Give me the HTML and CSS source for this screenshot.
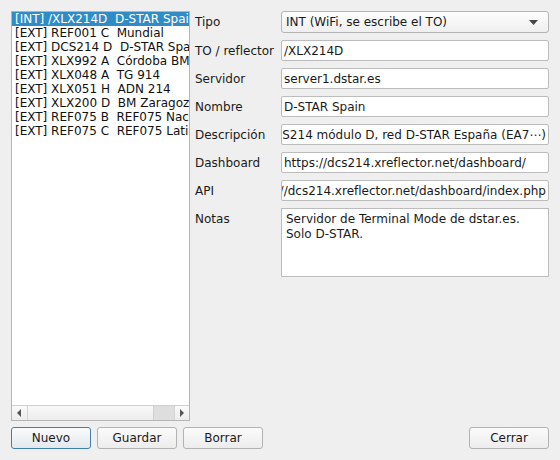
FILE: index.html
```html
<!DOCTYPE html>
<html lang="es">
<head>
<meta charset="utf-8">
<title>Reflectores</title>
<link rel="stylesheet" href="styles.css">
</head>
<body>
<div class="dialog">
  <div class="main">
    <div class="listbox">
      <ul class="items">
        <li class="item selected">[INT] /XLX214D  D-STAR Spain</li>
        <li class="item">[EXT] REF001 C  Mundial</li>
        <li class="item">[EXT] DCS214 D  D-STAR Spain</li>
        <li class="item">[EXT] XLX992 A  Córdoba BM</li>
        <li class="item">[EXT] XLX048 A  TG 914</li>
        <li class="item">[EXT] XLX051 H  ADN 214</li>
        <li class="item">[EXT] XLX200 D  BM Zaragoza</li>
        <li class="item">[EXT] REF075 B  REF075 Nacional</li>
        <li class="item">[EXT] REF075 C  REF075 Latino</li>
      </ul>
      <div class="hscroll">
        <span class="sb-btn"><svg width="5" height="8" viewBox="0 0 5 8"><path d="M4 0 L0 4 L4 8 Z" fill="#555"/></svg></span>
        <span class="sb-thumb"></span>
        <span class="sb-track"></span>
        <span class="sb-btn"><svg width="5" height="8" viewBox="0 0 5 8"><path d="M0 0 L4 4 L0 8 Z" fill="#555"/></svg></span>
      </div>
    </div>

    <div class="form">
      <label class="lbl">Tipo</label>
      <div class="combo">
        <span class="combo-text">INT (WiFi, se escribe el TO)</span>
        <svg class="combo-arrow" width="9" height="5" viewBox="0 0 9 5"><path d="M0 0 L9 0 L4.5 5 Z" fill="#444"/></svg>
      </div>

      <label class="lbl">TO / reflector</label>
      <div class="edit"><span class="edit-text">/XLX214D</span></div>

      <label class="lbl">Servidor</label>
      <div class="edit"><span class="edit-text">server1.dstar.es</span></div>

      <label class="lbl">Nombre</label>
      <div class="edit"><span class="edit-text">D-STAR Spain</span></div>

      <label class="lbl">Descripción</label>
      <div class="edit scrolled"><span class="edit-text">DCS214 módulo D, red D-STAR España (EA7⋯)</span></div>

      <label class="lbl">Dashboard</label>
      <div class="edit"><span class="edit-text">https://dcs214.xreflector.net/dashboard/</span></div>

      <label class="lbl">API</label>
      <div class="edit scrolled"><span class="edit-text">https://dcs214.xreflector.net/dashboard/index.php</span></div>

      <label class="lbl lbl-top">Notas</label>
      <div class="notes">Servidor de Terminal Mode de dstar.es.<br>Solo D-STAR.</div>
    </div>
  </div>

  <div class="buttons">
    <button class="btn default">Nuevo</button>
    <button class="btn">Guardar</button>
    <button class="btn">Borrar</button>
    <span class="spacer"></span>
    <button class="btn">Cerrar</button>
  </div>
</div>
</body>
</html>
```
FILE: styles.css
```css
html, body {
  margin: 0;
  padding: 0;
  background: #efefef;
}

body {
  font-family: "DejaVu Sans", sans-serif;
  font-size: 12px;
  color: #1a1a1a;
}

.dialog {
  width: 560px;
  height: 460px;
  box-sizing: border-box;
  padding: 11px 11px 11px 11px;
  display: flex;
  flex-direction: column;
  gap: 6px;
}

.main {
  display: flex;
  gap: 5px;
  height: 410px;
}

/* Reflector list */
.listbox {
  width: 179px;
  height: 410px;
  box-sizing: border-box;
  border: 1px solid #b5b5b5;
  background: #fff;
  display: flex;
  flex-direction: column;
}

.items {
  list-style: none;
  margin: 0;
  padding: 0;
  flex: 1;
  overflow: hidden;
}

.item {
  height: 14px;
  line-height: 14px;
  padding-left: 3px;
  white-space: pre;
  overflow: hidden;
  color: #111;
}

.item.selected {
  background: #308cc6;
  color: #fff;
}

.hscroll {
  height: 14px;
  display: flex;
  border-top: 1px solid #d0d0d0;
  background: #f3f3f3;
}

.sb-btn {
  width: 14px;
  display: flex;
  align-items: center;
  justify-content: center;
  background: linear-gradient(#fafafa, #ececec);
}

.sb-btn:first-child {
  width: 15px;
  border-right: 1px solid #d6d6d6;
}

.sb-btn:last-child {
  border-left: 1px solid #d6d6d6;
}

.sb-thumb {
  width: 125px;
  background: linear-gradient(#f8f8f8, #ededed);
  border-right: 1px solid #d0d0d0;
}

.sb-track {
  flex: 1;
  background: #dedede;
}

/* Edit form */
.form {
  flex: 1;
  display: grid;
  grid-template-columns: 86px 268px;
  grid-template-rows: 22px repeat(6, 21px) 69px;
  row-gap: 7px;
  align-content: start;
}

.lbl {
  display: flex;
  align-items: center;
  white-space: nowrap;
  color: #1a1a1a;
}

.lbl-top {
  align-items: flex-start;
  padding-top: 4px;
}

.combo {
  box-sizing: border-box;
  border: 1px solid #b4b4b4;
  border-radius: 3px;
  background: linear-gradient(#fdfdfd, #efefef);
  display: flex;
  align-items: center;
  padding: 0 10px 0 4px;
}

.combo-text {
  flex: 1;
  white-space: nowrap;
}

.edit {
  box-sizing: border-box;
  border: 1px solid #bcbcbc;
  border-radius: 2px;
  background: #fff;
  display: flex;
  align-items: center;
  padding: 0 3px 0 2px;
  overflow: hidden;
}

.edit-text {
  white-space: nowrap;
  flex-shrink: 0;
}

.edit.scrolled {
  justify-content: flex-end;
  padding-right: 2px;
}

.notes {
  box-sizing: border-box;
  border: 1px solid #bcbcbc;
  background: #fff;
  padding: 3px 4px;
  line-height: 15px;
  white-space: nowrap;
  overflow: hidden;
}

/* Dialog buttons */
.buttons {
  display: flex;
  gap: 6px;
  height: 22px;
}

.spacer {
  flex: 1;
}

.btn {
  width: 80px;
  height: 22px;
  box-sizing: border-box;
  border: 1px solid #b2b2b2;
  border-radius: 3px;
  background: linear-gradient(#fbfbfb, #ececec);
  font-family: "DejaVu Sans", sans-serif;
  font-size: 12px;
  color: #1a1a1a;
  padding: 0;
  margin: 0;
}

.btn:nth-child(2) {
  width: 80px;
}

.btn.default {
  border-color: #3e7fb0;
  background: linear-gradient(#fafbfc, #e4e8ec);
}
```
